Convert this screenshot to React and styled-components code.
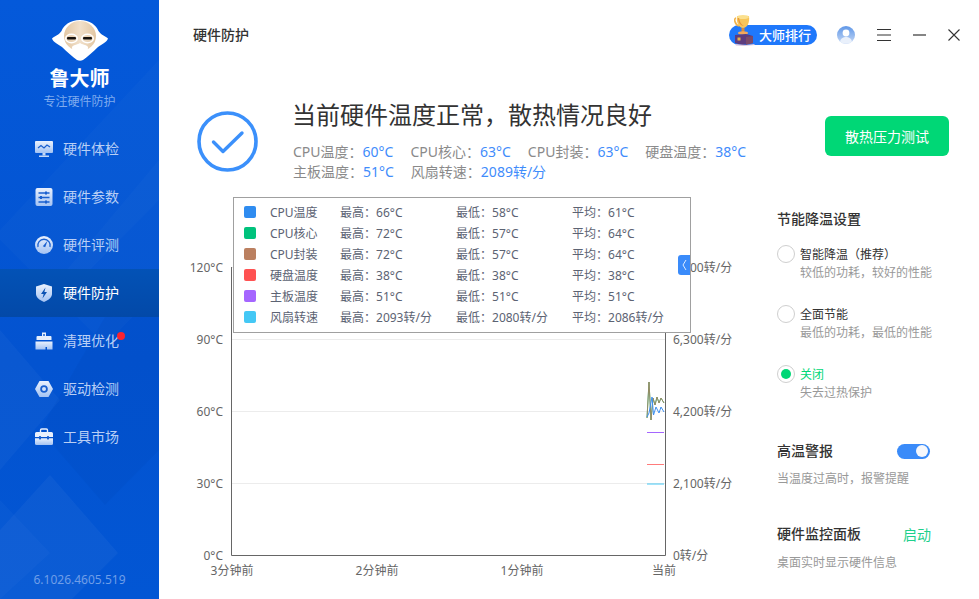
import React from "react";
import styled, { createGlobalStyle } from "styled-components";

const Global = createGlobalStyle`
  html, body { margin: 0; padding: 0; background: #fff; }
  body { font-family: "Noto Sans", "Noto Sans CJK SC", sans-serif; }
  * { box-sizing: border-box; }
`;

const Page = styled.div`
  display: flex;
  width: 979px;
  height: 599px;
  overflow: hidden;
  background: #fff;
`;

/* ---------- sidebar ---------- */
const Sidebar = styled.aside`
  position: relative;
  flex: 0 0 159px;
  display: flex;
  flex-direction: column;
  background: linear-gradient(180deg, #0459da 0%, #0353d0 60%, #0256d4 100%);
  overflow: hidden;
`;
const SideDecor = styled.svg`
  position: absolute;
  inset: 0;
`;
const Brand = styled.div`
  position: relative;
  display: flex;
  flex-direction: column;
  align-items: center;
  padding-top: 20px;
  height: 125px;
`;
const BrandName = styled.div`
  margin-top: 3px;
  font-size: 20px;
  line-height: 30px;
  font-weight: 700;
  color: #fff;
  letter-spacing: 0;
`;
const BrandSub = styled.div`
  font-size: 12px;
  line-height: 16px;
  color: #7fabee;
`;
const Nav = styled.nav`
  position: relative;
  display: flex;
  flex-direction: column;
`;
const NavItem = styled.div`
  display: flex;
  align-items: center;
  gap: 10px;
  height: 48px;
  padding-left: 35px;
  font-size: 14px;
  color: ${(p) => (p.$active ? "#fff" : "#b9cff5")};
  background: ${(p) =>
    p.$active ? "linear-gradient(180deg, #0352b6 0%, #0349a8 100%)" : "transparent"};
`;
const NavLabel = styled.span`
  position: relative;
  line-height: 20px;
`;
const RedDot = styled.span`
  position: absolute;
  right: -6px;
  top: 1px;
  width: 8px;
  height: 8px;
  border-radius: 50%;
  background: #f9232f;
`;
const Version = styled.div`
  position: relative;
  margin-top: auto;
  padding-bottom: 11px;
  text-align: center;
  font-size: 12px;
  line-height: 16px;
  color: #6f9ee8;
`;

/* ---------- main ---------- */
const Main = styled.main`
  flex: 1;
  display: flex;
  flex-direction: column;
  min-width: 0;
`;
const TopBar = styled.header`
  display: flex;
  align-items: center;
  height: 70px;
  padding: 0 19px 0 34px;
`;
const PageTitle = styled.div`
  font-size: 14px;
  font-weight: 500;
  line-height: 20px;
  margin-top: -1px;
  color: #333;
`;
const Tools = styled.div`
  margin-left: auto;
  display: flex;
  align-items: center;
`;
const RankPill = styled.div`
  position: relative;
  width: 88px;
  height: 20px;
  margin-right: 20px;
  padding-left: 30px;
  border-radius: 10px;
  background: #1f78fb;
  color: #fff;
  font-size: 13px;
  font-weight: 500;
  line-height: 20px;
`;
const Trophy = styled.svg`
  position: absolute;
  left: 5px;
  top: -10px;
`;
const ToolIcon = styled.svg`
  display: block;
  margin-left: ${(p) => p.$gap}px;
`;

const Hero = styled.section`
  display: flex;
  align-items: flex-start;
  margin-top: 29px;
  padding: 0 30px 0 38px;
`;
const HeroIcon = styled.svg`
  flex: none;
  margin-top: 12px;
`;
const HeroText = styled.div`
  margin-left: 34px;
  width: 470px;
`;
const HeroTitle = styled.h1`
  margin: 0 0 11px;
  font-size: 24px;
  line-height: 32px;
  font-weight: 400;
  color: #333;
  white-space: nowrap;
`;
const Stats = styled.div`
  display: flex;
  flex-wrap: wrap;
  column-gap: 17px;
  padding-left: 1px;
  font-size: 14px;
  line-height: 20px;
  color: #8a8a8a;
`;
const StatValue = styled.span`
  color: #3f8cfb;
`;
const TestButton = styled.button`
  margin: 17px 0 0 auto;
  width: 124px;
  height: 40px;
  border: 0;
  border-radius: 6px;
  background: #00d776;
  color: #fff;
  font: inherit;
  font-size: 14px;
`;

const Content = styled.section`
  display: grid;
  grid-template-columns: 618px 1fr;
  margin-top: 15px;
`;

/* ---------- chart ---------- */
const ChartBlock = styled.div`
  position: relative;
  padding-top: 70px;
  display: grid;
  grid-template-columns: 64px 443px 1fr;
  grid-template-rows: 289px auto;
  font-size: 12px;
  color: #666;
`;
const YAxis = styled.div`
  display: flex;
  flex-direction: column;
  justify-content: space-between;
  height: 288px;
  align-items: ${(p) => (p.$right ? "flex-start" : "flex-end")};
  padding-left: ${(p) => (p.$right ? "7px" : "0")};
`;
const YTick = styled.div`
  height: 0;
  display: flex;
  align-items: center;
  white-space: nowrap;
`;
const PlotWrap = styled.div`
  padding-left: 8px;
`;
const PlotSvg = styled.svg`
  display: block;
`;
const XAxis = styled.div`
  grid-column: 2;
  margin-left: 9px;
  display: grid;
  grid-template-columns: 145px 145px 142px 0;
  height: 27px;
  align-items: center;
`;
const XTick = styled.div`
  width: 0;
  display: flex;
  justify-content: center;
  white-space: nowrap;
`;
const Tooltip = styled.div`
  position: absolute;
  z-index: 2;
  left: 74px;
  top: 0;
  width: 458px;
  height: 136px;
  padding: 3px 0 0 10px;
  background: #fff;
  border: 1px solid #a0a0a0;
  color: #5c6373;
`;
const TipRow = styled.div`
  display: grid;
  grid-template-columns: 26px 70px 116px 116px auto;
  align-items: center;
  height: 21px;
  font-size: 12px;
  white-space: nowrap;
`;
const Swatch = styled.span`
  display: block;
  width: 12px;
  height: 12px;
  border-radius: 2px;
  background: ${(p) => p.$color};
`;
const TipTab = styled.div`
  position: absolute;
  right: 0;
  top: 57px;
  width: 12px;
  height: 20px;
  display: flex;
  align-items: center;
  justify-content: center;
  background: #3a8bfa;
  border-radius: 3px 0 0 3px;
`;

/* ---------- settings ---------- */
const Panel = styled.div`
  padding-top: 12px;
  width: 154px;
  color: #333;
`;
const SectionTitle = styled.div`
  font-size: 14px;
  line-height: 20px;
  font-weight: 500;
  color: #333;
  white-space: nowrap;
`;
const Options = styled.div`
  display: flex;
  flex-direction: column;
  gap: 23px;
  margin-top: 16px;
  margin-bottom: 39px;
`;
const Option = styled.div`
  display: grid;
  grid-template-columns: 23px 1fr;
  font-size: 12px;
  line-height: 18px;
  white-space: nowrap;
`;
const Radio = styled.span`
  display: flex;
  align-items: center;
  justify-content: center;
  width: 18px;
  height: 18px;
  border-radius: 50%;
  border: 1px solid #cfcfcf;
  &::after {
    content: "";
    display: ${(p) => (p.$checked ? "block" : "none")};
    width: 10px;
    height: 10px;
    border-radius: 50%;
    background: #00d776;
  }
`;
const OptionName = styled.div`
  padding-top: 1px;
  color: ${(p) => (p.$checked ? "#00d776" : "#333")};
`;
const SubText = styled.div`
  font-size: 12px;
  line-height: 18px;
  color: #999;
  white-space: nowrap;
`;
const OptionSub = styled(SubText)`
  grid-column: 2;
`;
const HeadRow = styled.div`
  display: flex;
  align-items: center;
  justify-content: space-between;
  height: 20px;
  margin-bottom: ${(p) => p.$mb}px;
`;
const Toggle = styled.span`
  display: flex;
  justify-content: flex-end;
  align-items: center;
  width: 33px;
  height: 15px;
  margin-right: 1px;
  padding-right: 2px;
  border-radius: 8px;
  background: #3a8bf9;
  &::after {
    content: "";
    width: 12px;
    height: 12px;
    border-radius: 50%;
    background: #f6f8fc;
  }
`;
const StartLink = styled.span`
  font-size: 14px;
  color: #1ed08c;
`;
const AlarmBlock = styled.div`
  margin-bottom: 36px;
`;

/* ---------- drawings ---------- */
const Mascot = () => (
  <svg width="56" height="41" viewBox="0 0 56 41">
    <defs>
      <linearGradient id="faceG" x1="0" y1="0" x2="1" y2="0">
        <stop offset="0" stopColor="#e2c6a2" />
        <stop offset="0.5" stopColor="#f1e0ca" />
        <stop offset="1" stopColor="#e2c6a2" />
      </linearGradient>
    </defs>
    <path
      d="M28 0C38 0 44 5 46.5 11C49 15 53 16 56 18.5C55 22 50 24 46 27C41 32 35 37 31 40C29 41 27 41 25 40C21 37 15 32 10 27C6 24 1 22 0 18.5C3 16 7 15 9.5 11C12 5 18 0 28 0Z"
      fill="#fff"
    />
    <ellipse cx="28" cy="16" rx="16" ry="15" fill="url(#faceG)" />
    <ellipse cx="19.5" cy="18.5" rx="5.8" ry="4.2" fill="none" stroke="#fff" strokeWidth="1.4" />
    <ellipse cx="35.5" cy="18.5" rx="5.8" ry="4.2" fill="none" stroke="#fff" strokeWidth="1.4" />
    <rect x="15" y="17" width="9" height="2.6" rx="1" fill="#17120e" />
    <rect x="31" y="17" width="9" height="2.6" rx="1" fill="#17120e" />
    <path d="M28 23C30 25 34 24 36 27C36 33 32 37 28 39.5C24 37 20 33 20 27C22 24 26 25 28 23Z" fill="#fff" />
  </svg>
);

const NavGlyph = ({ id, children }) => (
  <svg width="18" height="18" viewBox="0 0 18 18">
    <defs>
      <linearGradient id={id} x1="0" y1="0" x2="0" y2="1">
        <stop offset="0" stopColor="#eaf1fd" />
        <stop offset="1" stopColor="#a4c3f3" />
      </linearGradient>
    </defs>
    {children(`url(#${id})`)}
  </svg>
);

const DARK = "#1a60cf";

const icons = {
  monitor: (f) => (
    <>
      <rect x="0" y="1" width="18" height="12" rx="1" fill={f} />
      <path d="M3 8L6 5.5L9 8L12 5L15 7" fill="none" stroke={DARK} strokeWidth="1.2" />
      <rect x="7.5" y="13" width="3" height="2.5" fill="#c4d8f7" />
      <rect x="4" y="15.5" width="10" height="1.5" fill="#c4d8f7" />
    </>
  ),
  params: (f) => (
    <>
      <rect x="0.5" y="0" width="17" height="18" rx="2" fill={f} />
      <path d="M3.5 5H14.5M3.5 9.5H14.5M3.5 14H14.5" stroke={DARK} strokeWidth="1.3" />
      <rect x="10" y="3.5" width="2" height="3" fill={DARK} />
      <rect x="5" y="8" width="2" height="3" fill={DARK} />
      <rect x="10" y="12.5" width="2" height="3" fill={DARK} />
    </>
  ),
  gauge: (f) => (
    <>
      <circle cx="9" cy="9" r="9" fill={f} />
      <path d="M3 11A6.2 6.2 0 1 1 15 11" fill="none" stroke={DARK} strokeWidth="1.3" />
      <path d="M7.8 10.2L12.5 4.8L10.2 11.2Z" fill={DARK} />
    </>
  ),
  shield: (f) => (
    <>
      <path d="M9 0L17 2.5V10C17 13.5 13 16.5 9 18C5 16.5 1 13.5 1 10V2.5Z" fill={f} />
      <path d="M10.5 3.5L6 10H8.6L7.5 14.5L12 8H9.4Z" fill="#0b52b3" />
    </>
  ),
  brush: (f) => (
    <>
      <path d="M7 0.5H11V4H15.5A1 1 0 0 1 16.5 5V8H1.5V5A1 1 0 0 1 2.5 4H7Z" fill="#e6effc" />
      <circle cx="9" cy="3" r="1" fill={DARK} />
      <path d="M0.5 9.5H17.5V17.5H12V15H10.5V17.5H0.5Z" fill={f} />
    </>
  ),
  nut: (f) => (
    <>
      <path d="M4.5 1H13.5L18 9L13.5 17H4.5L0 9Z" fill={f} />
      <circle cx="9" cy="9" r="3.8" fill={DARK} />
      <circle cx="9" cy="9" r="2" fill="#d3e2f9" />
    </>
  ),
  box: (f) => (
    <>
      <path d="M5.5 4V2.2A1.2 1.2 0 0 1 6.7 1H11.3A1.2 1.2 0 0 1 12.5 2.2V4" fill="none" stroke="#eaf1fd" strokeWidth="1.4" />
      <path d="M1.5 4H16.5A1.5 1.5 0 0 1 18 5.5V9H0V5.5A1.5 1.5 0 0 1 1.5 4Z" fill="#eaf1fd" />
      <path d="M0 10.2H18V15.5A1.5 1.5 0 0 1 16.5 17H1.5A1.5 1.5 0 0 1 0 15.5Z" fill={f} />
      <rect x="4" y="8" width="2" height="3.4" rx="0.6" fill={DARK} />
      <rect x="12" y="8" width="2" height="3.4" rx="0.6" fill={DARK} />
    </>
  ),
};

const navItems = [
  { key: "monitor", label: "硬件体检" },
  { key: "params", label: "硬件参数" },
  { key: "gauge", label: "硬件评测" },
  { key: "shield", label: "硬件防护", active: true },
  { key: "brush", label: "清理优化", dot: true },
  { key: "nut", label: "驱动检测" },
  { key: "box", label: "工具市场" },
];

const stats = [
  ["CPU温度\uFF1A", "60°C"],
  ["CPU核心\uFF1A", "63°C"],
  ["CPU封装\uFF1A", "63°C"],
  ["硬盘温度\uFF1A", "38°C"],
  ["主板温度\uFF1A", "51°C"],
  ["风扇转速\uFF1A", "2089转/分"],
];

const tipRows = [
  ["#2f8cf0", "CPU温度", "66°C", "58°C", "61°C"],
  ["#00c27c", "CPU核心", "72°C", "57°C", "64°C"],
  ["#bb8060", "CPU封装", "72°C", "57°C", "64°C"],
  ["#ff5252", "硬盘温度", "38°C", "38°C", "38°C"],
  ["#a566ff", "主板温度", "51°C", "51°C", "51°C"],
  ["#44c8f5", "风扇转速", "2093转/分", "2080转/分", "2086转/分"],
];

const options = [
  { name: "智能降温\uFF08推荐\uFF09", sub: "较低的功耗\uFF0C较好的性能" },
  { name: "全面节能", sub: "最低的功耗\uFF0C最低的性能" },
  { name: "关闭", sub: "失去过热保护", checked: true },
];

export default function App() {
  return (
    <Page>
      <Global />
      <Sidebar>
        <SideDecor width="159" height="599" viewBox="0 0 159 599">
          <polygon points="159,60 159,200 60,300 0,240 0,230" fill="#fff" opacity="0.018" />
          <polygon points="159,160 159,290 105,345 50,290" fill="#fff" opacity="0.02" />
          <polygon points="0,330 60,400 0,470" fill="#fff" opacity="0.03" />
          <polygon points="105,317 159,317 159,450 105,505 40,430" fill="#003fae" opacity="0.12" />
          <polygon points="50,475 118,553 72,599 0,599 0,530" fill="#fff" opacity="0.04" />
          <polygon points="0,500 50,553 0,599" fill="#fff" opacity="0.025" />
        </SideDecor>
        <Brand>
          <Mascot />
          <BrandName>鲁大师</BrandName>
          <BrandSub>专注硬件防护</BrandSub>
        </Brand>
        <Nav>
          {navItems.map((it) => (
            <NavItem key={it.key} $active={it.active}>
              <NavGlyph id={`g-${it.key}`}>{icons[it.key]}</NavGlyph>
              <NavLabel>
                {it.label}
                {it.dot && <RedDot />}
              </NavLabel>
            </NavItem>
          ))}
        </Nav>
        <Version>6.1026.4605.519</Version>
      </Sidebar>

      <Main>
        <TopBar>
          <PageTitle>硬件防护</PageTitle>
          <Tools>
            <RankPill>
              <Trophy width="22" height="31" viewBox="0 0 22 31">
                <path d="M2 3C0 3 0 9 5 11" fill="none" stroke="#f0b24a" strokeWidth="1.6" />
                <path d="M3 1H15C16 8 13 13 9 13C5 13 2 8 3 1Z" fill="#f7c55a" />
                <ellipse cx="9" cy="2" rx="6" ry="2" fill="#fbe08e" />
                <path d="M5 3C6 8 8 10 10 11C7 11 4 8 4 3Z" fill="#e8953a" />
                <rect x="7.5" y="13" width="3" height="4" fill="#d98a3a" />
                <ellipse cx="9" cy="18" rx="5" ry="1.7" fill="#f3a85c" />
                <path d="M1 20L12 19L19 21V28L8 30L1 28Z" fill="#5d3c7e" />
                <path d="M12 22L19 21V28L12 30Z" fill="#7a4a6a" />
                <rect x="3.5" y="22.5" width="3" height="3" fill="#e8b04a" />
                <path d="M1 29L12 30L20 29L21 30L10 31L2 30.5Z" fill="#d9c4dc" />
              </Trophy>
              大师排行
            </RankPill>
            <ToolIcon $gap={0} width="18" height="18" viewBox="0 0 18 18">
              <defs>
                <linearGradient id="avatarBg" x1="0" y1="0" x2="0" y2="1">
                  <stop offset="0" stopColor="#5f97e8" />
                  <stop offset="1" stopColor="#c7d9f5" />
                </linearGradient>
              </defs>
              <circle cx="9" cy="9" r="9" fill="url(#avatarBg)" />
              <circle cx="9" cy="7" r="3.4" fill="#fff" />
              <path d="M3 15.5C4 12 6.5 11 9 11C11.5 11 14 12 15 15.5C12 18.5 6 18.5 3 15.5Z" fill="#e9f0fb" />
            </ToolIcon>
            <ToolIcon $gap={22} width="14" height="12" viewBox="0 0 14 12">
              <path d="M0 0.5H14M0 6H14M0 11.5H14" stroke="#333" strokeWidth="1" />
            </ToolIcon>
            <ToolIcon $gap={22} width="13" height="2" viewBox="0 0 13 2">
              <path d="M0 1H13" stroke="#333" strokeWidth="1.2" />
            </ToolIcon>
            <ToolIcon $gap={22} width="12" height="12" viewBox="0 0 12 12">
              <path d="M0.5 0.5L11.5 11.5M11.5 0.5L0.5 11.5" stroke="#333" strokeWidth="1.1" />
            </ToolIcon>
          </Tools>
        </TopBar>

        <Hero>
          <HeroIcon width="61" height="61" viewBox="0 0 61 61">
            <circle cx="30.5" cy="30.5" r="28.5" fill="none" stroke="#3b90fb" strokeWidth="3.6" />
            <path d="M16.5 31L26 40.5L45 22" fill="none" stroke="#3b90fb" strokeWidth="3.4" strokeLinecap="round" strokeLinejoin="round" />
          </HeroIcon>
          <HeroText>
            <HeroTitle>当前硬件温度正常{"\uFF0C"}散热情况良好</HeroTitle>
            <Stats>
              {stats.map(([k, v]) => (
                <span key={k}>
                  {k}
                  <StatValue>{v}</StatValue>
                </span>
              ))}
            </Stats>
          </HeroText>
          <TestButton>散热压力测试</TestButton>
        </Hero>

        <Content>
          <ChartBlock>
            <Tooltip>
              {tipRows.map(([c, name, hi, lo, avg]) => (
                <TipRow key={name}>
                  <Swatch $color={c} />
                  <span>{name}</span>
                  <span>最高{"\uFF1A"}{hi}</span>
                  <span>最低{"\uFF1A"}{lo}</span>
                  <span>平均{"\uFF1A"}{avg}</span>
                </TipRow>
              ))}
              <TipTab>
                <svg width="5" height="12" viewBox="0 0 5 12">
                  <path d="M4 1L1 6L4 11" fill="none" stroke="#dcebff" strokeWidth="1" />
                </svg>
              </TipTab>
            </Tooltip>
            <YAxis>
              {["120°C", "90°C", "60°C", "30°C", "0°C"].map((t) => (
                <YTick key={t}>{t}</YTick>
              ))}
            </YAxis>
            <PlotWrap>
              <PlotSvg width="435" height="289" viewBox="0 0 435 289">
                <path d="M0 0.5H434M0 72.5H434M0 144.5H434M0 216.5H434" stroke="#ececec" strokeWidth="1" />
                <path d="M416 151L418 115L420 153L422 131L424 138L426 130L428 136L430 131L433 136" fill="none" stroke="#20b070" strokeWidth="1" />
                <path d="M416 151L418 115L420 153L422 131L424 138L426 130L428 136L430 131L433 136" fill="none" stroke="#bb8060" strokeWidth="1" opacity="0.75" />
                <path d="M416 150L418 146L421 130L422.5 148L425 140L428 146L430 140L433 145" fill="none" stroke="#3d8ff0" strokeWidth="1" />
                <path d="M416 165.5H433" stroke="#a566ff" strokeWidth="1" />
                <path d="M416 197.5H433" stroke="#ff7b7b" strokeWidth="1" />
                <path d="M416 217H433" stroke="#44c8f5" strokeWidth="1" />
                <path d="M0.5 0V288.5H434.5V0" fill="none" stroke="#666" strokeWidth="1" />
              </PlotSvg>
            </PlotWrap>
            <YAxis $right>
              {["8,400转/分", "6,300转/分", "4,200转/分", "2,100转/分", "0转/分"].map((t) => (
                <YTick key={t}>{t}</YTick>
              ))}
            </YAxis>
            <XAxis>
              <XTick>3分钟前</XTick>
              <XTick>2分钟前</XTick>
              <XTick>1分钟前</XTick>
              <XTick>当前</XTick>
            </XAxis>
          </ChartBlock>

          <Panel>
            <SectionTitle>节能降温设置</SectionTitle>
            <Options>
              {options.map((o) => (
                <Option key={o.name}>
                  <Radio $checked={o.checked} />
                  <OptionName $checked={o.checked}>{o.name}</OptionName>
                  <OptionSub>{o.sub}</OptionSub>
                </Option>
              ))}
            </Options>
            <AlarmBlock>
              <HeadRow $mb={9}>
                <SectionTitle>高温警报</SectionTitle>
                <Toggle />
              </HeadRow>
              <SubText>当温度过高时{"\uFF0C"}报警提醒</SubText>
            </AlarmBlock>
            <HeadRow $mb={10}>
              <SectionTitle>硬件监控面板</SectionTitle>
              <StartLink>启动</StartLink>
            </HeadRow>
            <SubText>桌面实时显示硬件信息</SubText>
          </Panel>
        </Content>
      </Main>
    </Page>
  );
}
